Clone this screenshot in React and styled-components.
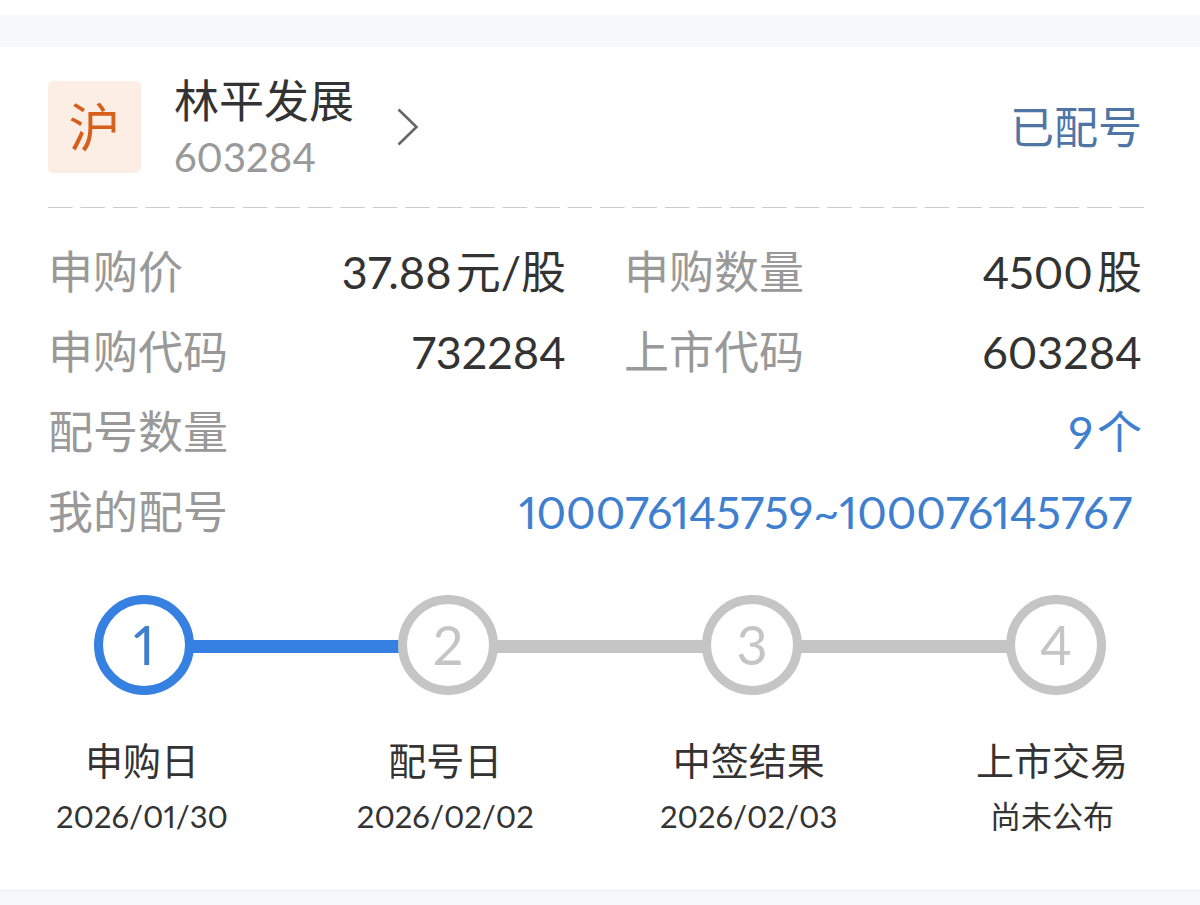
import styled, { createGlobalStyle } from 'styled-components';

const GlobalStyle = createGlobalStyle`
    * {
        box-sizing: border-box;
    }

    body {
        margin: 0;
        background: #f7f8fa;
        color: #333;
        font-family: Lato, "Noto Sans CJK SC", sans-serif;
        font-variant-numeric: proportional-nums;
    }
`;

const Page = styled.main`
    display: flex;
    flex-direction: column;
    gap: 32px;
`;

const PreviousCard = styled.div`
    height: 15px;
    background: #fff;
`;

const Card = styled.article`
    padding: 28px 56px 46px 48px;
    background: #fff;
    border-bottom: 1px solid #e9ebee;
`;

const Header = styled.header`
    display: flex;
    align-items: center;
    justify-content: space-between;
    padding-right: 2px;
`;

const StockButton = styled.button`
    display: flex;
    align-items: center;
    padding: 0;
    border: 0;
    background: none;
    color: inherit;
    font: inherit;
    text-align: left;
    cursor: pointer;
`;

const Market = styled.span`
    display: flex;
    align-items: center;
    justify-content: center;
    width: 93px;
    height: 92px;
    margin-right: 33px;
    border-radius: 5px;
    background: #fdeee5;
    color: #d65f1c;
    font-size: 52px;
    line-height: 60px;
`;

const StockName = styled.span`
    display: flex;
    flex-direction: column;
    margin-right: 43px;
    font-size: 45px;
    line-height: 52px;
`;

const StockCode = styled.span`
    padding-top: 8px;
    color: #999;
    font-size: 40px;
    line-height: 44px;
`;

const Status = styled.span`
    color: #4f75a5;
    font-size: 44px;
    line-height: 56px;
`;

const Divider = styled.hr`
    height: 1px;
    margin: 28px -8px 24px 0;
    border: 0;
    background: linear-gradient(90deg, #ccc 75%, transparent 75%) 0 0 / calc(100% / 34) 1px;
`;

const Details = styled.dl`
    display: grid;
    grid-template-columns: 1fr 1fr;
    column-gap: 58px;
    margin: 0;
    padding: 0 2px 0 0;
    font-size: 45px;
    line-height: 80px;
`;

const Detail = styled.div`
    display: flex;
    justify-content: space-between;
    grid-column: ${(props) => (props.$wide ? '1 / -1' : 'auto')};
`;

const Label = styled.dt`
    color: #999;
`;

const Value = styled.dd`
    margin: 0;
    color: ${(props) => (props.$blue ? '#3f7fcf' : '#333')};
`;

const Unit = styled.span`
    margin-left: 4px;
`;

const NumberLink = styled.a`
    padding-right: 10px;
    color: inherit;
    text-decoration: none;
`;

const Track = styled.div`
    display: flex;
    align-items: center;
    margin-top: 43px;
    padding: 0 38px 0 46px;
`;

const Circle = styled.span`
    display: flex;
    align-items: center;
    justify-content: center;
    width: 100px;
    height: 100px;
    border: 9px solid ${(props) => (props.$active ? '#3580e0' : '#c5c5c5')};
    border-radius: 50%;
    color: ${(props) => (props.$active ? '#3f7fcf' : '#c5c5c5')};
    font-size: 54px;
    line-height: 60px;
`;

const Connector = styled.span`
    flex: 1;
    height: 13px;
    margin: 2px -2px 0;
    background: ${(props) => (props.$active ? '#3580e0' : '#c5c5c5')};
`;

const Steps = styled.ol`
    display: flex;
    justify-content: space-between;
    margin: 37px -2px 0 0;
    padding: 0;
    list-style: none;
`;

const Step = styled.li`
    display: flex;
    flex-direction: column;
    align-items: center;
    width: 188px;
    font-size: 38px;
    line-height: 56px;
`;

const StepDate = styled.span`
    font-size: 31px;
`;

const details = [
    { label: '申购价', value: '37.88', unit: '元/股' },
    { label: '申购数量', value: '4500', unit: '股' },
    { label: '申购代码', value: '732284' },
    { label: '上市代码', value: '603284' },
];

const steps = [
    { title: '申购日', date: '2026/01/30' },
    { title: '配号日', date: '2026/02/02' },
    { title: '中签结果', date: '2026/02/03' },
    { title: '上市交易', date: '尚未公布' },
];

function Chevron() {
    return (
        <svg width="22" height="38" viewBox="0 0 22 38" fill="none" aria-hidden="true">
            <path d="M1.5 1.5L19.5 19L1.5 36.5" stroke="#666" strokeWidth="2.6" />
        </svg>
    );
}

function Progress({ current }) {
    return (
        <Track aria-hidden="true">
            {steps.map((step, index) => [
                index > 0 && <Connector key={`${step.title}-line`} $active={index <= current} />,
                <Circle key={step.title} $active={index < current}>{index + 1}</Circle>,
            ])}
        </Track>
    );
}

function App() {
    return (
        <>
            <GlobalStyle />
            <Page lang="zh-CN">
                <PreviousCard />
                <Card>
                    <Header>
                        <StockButton type="button">
                            <Market>沪</Market>
                            <StockName>
                                林平发展
                                <StockCode>603284</StockCode>
                            </StockName>
                            <Chevron />
                        </StockButton>
                        <Status>已配号</Status>
                    </Header>
                    <Divider />
                    <Details>
                        {details.map((item) => (
                            <Detail key={item.label}>
                                <Label>{item.label}</Label>
                                <Value>
                                    {item.value}
                                    {item.unit && <Unit>{item.unit}</Unit>}
                                </Value>
                            </Detail>
                        ))}
                        <Detail $wide>
                            <Label>配号数量</Label>
                            <Value $blue>9<Unit>个</Unit></Value>
                        </Detail>
                        <Detail $wide>
                            <Label>我的配号</Label>
                            <Value $blue>
                                <NumberLink href="#numbers">100076145759~100076145767</NumberLink>
                            </Value>
                        </Detail>
                    </Details>
                    <Progress current={1} />
                    <Steps>
                        {steps.map((step) => (
                            <Step key={step.title}>
                                {step.title}
                                <StepDate>{step.date}</StepDate>
                            </Step>
                        ))}
                    </Steps>
                </Card>
            </Page>
        </>
    );
}

export default App;
